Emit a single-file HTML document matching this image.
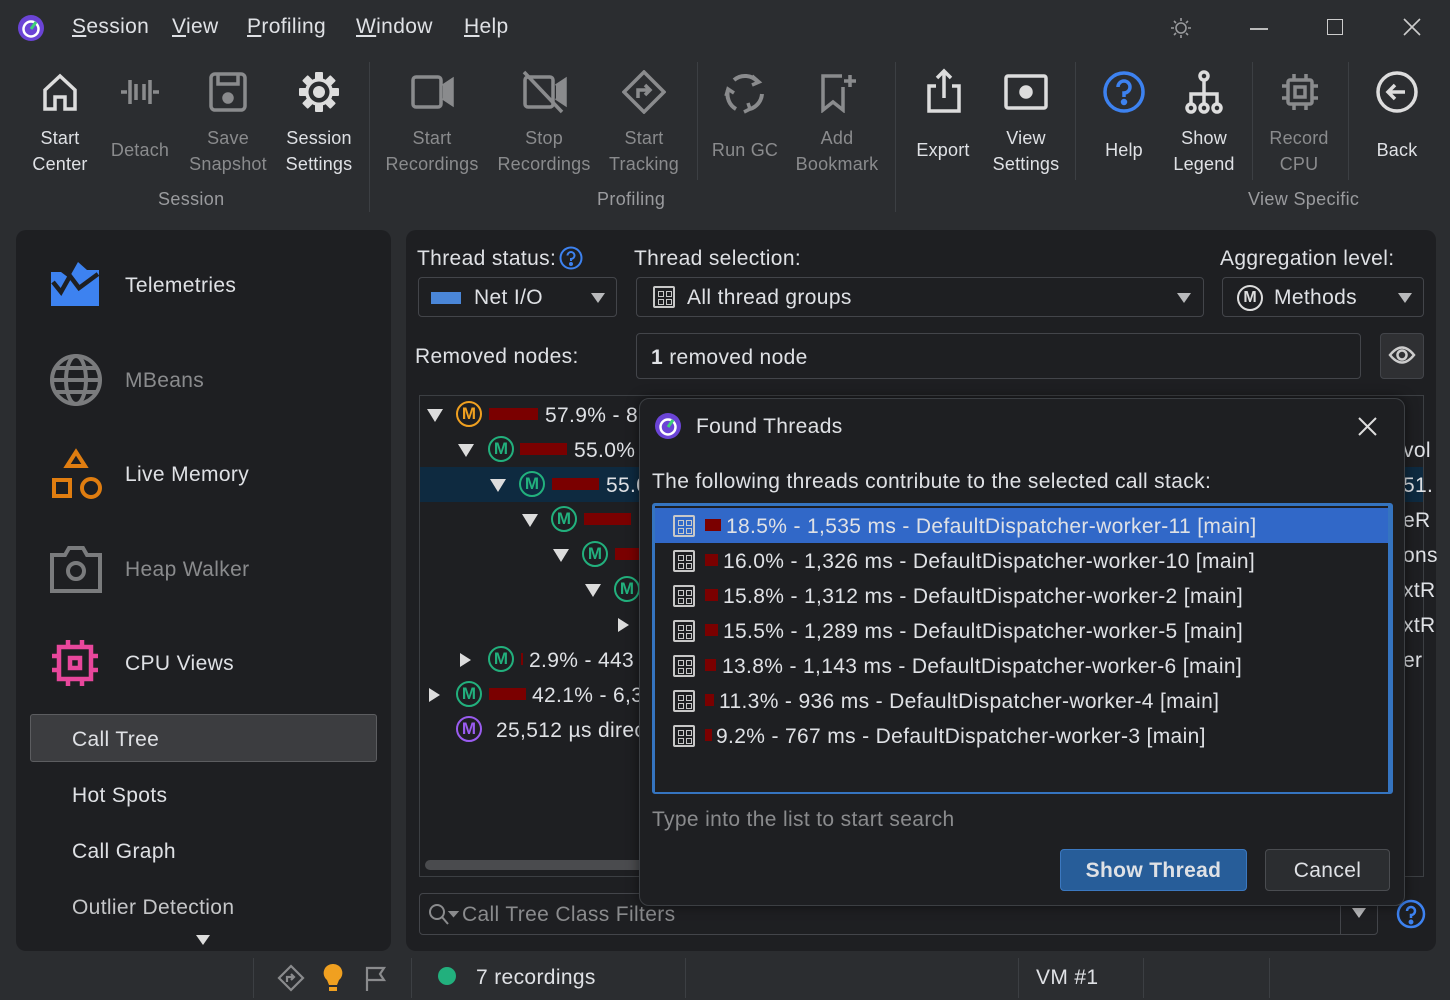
<!DOCTYPE html>
<html><head><meta charset="utf-8">
<style>
*{box-sizing:border-box;margin:0;padding:0}
body{width:1450px;height:1000px;background:#2b2d30;font-family:"Liberation Sans",sans-serif;color:#dfe1e5;position:relative;overflow:hidden;letter-spacing:0.35px}
.a{position:absolute}
.menu{top:15px;font-size:21px;color:#dfe1e5}
.menu u{text-decoration:underline}
.tb{position:absolute;width:120px;text-align:center;font-size:18px;line-height:26px;letter-spacing:0.2px}
.dis{color:#8a8b8d}
.sep{position:absolute;width:1px;background:#3c3f43}
.glab{position:absolute;font-size:18px;color:#9a9b9e}
.panel{position:absolute;background:#1e1f22;border-radius:10px}
.side{font-size:21px}
.fld{position:absolute;border:1px solid #43454a;border-radius:4px;background:#1e1f22;height:40px;font-size:21px;line-height:40px}
.tri{position:absolute;width:0;height:0;border-left:7px solid transparent;border-right:7px solid transparent;border-top:10px solid #b8b9bb}
.trr{position:absolute;width:0;height:0;border-top:7px solid transparent;border-bottom:7px solid transparent;border-left:11px solid #dcdcdc}
.trd{position:absolute;width:0;height:0;border-left:8px solid transparent;border-right:8px solid transparent;border-top:13px solid #dcdcdc}
.m{position:absolute;width:26px;height:26px;border:2.5px solid #22b07d;border-radius:50%;color:#22b07d;font-size:17px;font-weight:bold;text-align:center;line-height:21px;letter-spacing:0}
.bar{position:absolute;height:12px;background:#7a0000}
.tt{position:absolute;font-size:21px;white-space:nowrap}
.row{position:absolute;left:0;height:35px;width:100%;font-size:21px;line-height:37px;white-space:nowrap}
.gi{position:absolute;left:18px;top:7px;width:22px;height:22px;border:2px solid #c8c8c8;border-radius:2px;background:
linear-gradient(#c8c8c8,#c8c8c8) 3px 3px/6px 6px no-repeat,linear-gradient(#c8c8c8,#c8c8c8) 11px 3px/6px 6px no-repeat,linear-gradient(#c8c8c8,#c8c8c8) 3px 11px/6px 6px no-repeat,linear-gradient(#c8c8c8,#c8c8c8) 11px 11px/6px 6px no-repeat}
.gi:after{content:"";position:absolute;left:4px;top:4px;width:4px;height:4px;background:#1e1f22;box-shadow:8px 0 #1e1f22,0 8px #1e1f22,8px 8px #1e1f22}
.sel .gi:after{background:#3168c8;box-shadow:8px 0 #3168c8,0 8px #3168c8,8px 8px #3168c8}
</style></head><body>

<svg class="a" style="left:17px;top:14px" width="28" height="28" viewBox="0 0 28 28"><circle cx="14" cy="14" r="13" fill="#6b44d6"/><circle cx="14" cy="15" r="7.5" fill="none" stroke="#fff" stroke-width="2.5"/><path d="M14 15 L19 8" stroke="#3dd07a" stroke-width="3"/></svg>
<div class="a menu" style="left:72px"><u>S</u>ession</div>
<div class="a menu" style="left:172px"><u>V</u>iew</div>
<div class="a menu" style="left:247px"><u>P</u>rofiling</div>
<div class="a menu" style="left:356px"><u>W</u>indow</div>
<div class="a menu" style="left:464px"><u>H</u>elp</div>
<svg class="a" style="left:1170px;top:17px" width="22" height="22" viewBox="0 0 22 22" stroke="#9a9b9e" stroke-width="1.6" fill="none"><circle cx="11" cy="11" r="5"/><path d="M11 1v3M11 18v3M1 11h3M18 11h3M4 4l2 2M16 16l2 2M4 18l2-2M16 6l2-2"/></svg>
<div class="a" style="left:1250px;top:28px;width:18px;height:1.5px;background:#bbb"></div>
<div class="a" style="left:1327px;top:19px;width:16px;height:16px;border:1.5px solid #ccc"></div>
<svg class="a" style="left:1403px;top:18px" width="18" height="18" stroke="#ccc" stroke-width="1.6"><path d="M1 1L17 17M17 1L1 17"/></svg>

<div class="tb" style="left:0;top:125px">Start<br>Center</div>
<svg class="a" style="left:42px;top:72px" width="36" height="40" viewBox="0 0 36 40" fill="none" stroke="#ddd" stroke-width="3.5"><path d="M3 18L18 4L33 18V37H23V25H13V37H3Z"/></svg>
<div class="tb dis" style="left:80px;top:137px">Detach</div>
<svg class="a" style="left:118px;top:74px" width="44" height="36" viewBox="0 0 44 36" fill="none" stroke="#8a8b8d" stroke-width="3.5"><path d="M3 18H9M35 18H41M12 6V30M32 6V30M18 10V26M26 10V26"/></svg>
<div class="tb dis" style="left:168px;top:125px">Save<br>Snapshot</div>
<svg class="a" style="left:209px;top:72px" width="38" height="40" viewBox="0 0 38 40" fill="none" stroke="#8a8b8d" stroke-width="3.5"><rect x="2" y="2" width="34" height="36" rx="4"/><path d="M9 2V12H29V2"/><circle cx="19" cy="26" r="4" fill="#8a8b8d"/></svg>
<div class="tb" style="left:259px;top:125px">Session<br>Settings</div>
<svg class="a" style="left:298px;top:71px" width="42" height="42" viewBox="0 0 42 42"><g fill="#ddd"><rect x="17" y="1" width="8" height="40" rx="1"/><rect x="17" y="1" width="8" height="40" rx="1" transform="rotate(45 21 21)"/><rect x="17" y="1" width="8" height="40" rx="1" transform="rotate(90 21 21)"/><rect x="17" y="1" width="8" height="40" rx="1" transform="rotate(135 21 21)"/><circle cx="21" cy="21" r="14"/></g><circle cx="21" cy="21" r="10.5" fill="#2b2d30"/><circle cx="21" cy="21" r="6" fill="#ddd"/></svg>
<div class="sep" style="left:369px;top:62px;height:150px"></div>
<div class="tb dis" style="left:372px;top:125px">Start<br>Recordings</div>
<svg class="a" style="left:411px;top:74px" width="44" height="36" viewBox="0 0 44 36" fill="none" stroke="#8a8b8d" stroke-width="3.5"><rect x="2" y="3" width="28" height="30" rx="3"/><path d="M32 12L41 6V30L32 24" fill="#8a8b8d"/></svg>
<div class="tb dis" style="left:484px;top:125px">Stop<br>Recordings</div>
<svg class="a" style="left:522px;top:70px" width="46" height="44" viewBox="0 0 46 44" fill="none" stroke="#8a8b8d" stroke-width="3.5"><rect x="3" y="7" width="28" height="30" rx="3"/><path d="M34 16L43 10V34L34 28" fill="#8a8b8d"/><path d="M2 2L40 42"/></svg>
<div class="tb dis" style="left:584px;top:125px">Start<br>Tracking</div>
<svg class="a" style="left:622px;top:70px" width="44" height="44" viewBox="0 0 44 44" fill="none" stroke="#8a8b8d" stroke-width="3.5"><path d="M22 2L42 22L22 42L2 22Z"/><path d="M16 28V20H27M23 15L28 20L23 25"/></svg>
<div class="sep" style="left:697px;top:62px;height:118px"></div>
<div class="tb dis" style="left:685px;top:137px">Run GC</div>
<svg class="a" style="left:722px;top:70px" width="46" height="46" viewBox="0 0 46 46" fill="none" stroke="#8a8b8d" stroke-width="4"><path d="M12 10A17 17 0 0 1 36 12M40 24A17 17 0 0 1 28 39M14 39A17 17 0 0 1 6 20"/><path d="M30 6L37 12L30 15M22 42L28 39L26 33M4 26L6 19L12 23" stroke-width="3.5"/></svg>
<div class="tb dis" style="left:777px;top:125px">Add<br>Bookmark</div>
<svg class="a" style="left:820px;top:73px" width="38" height="40" viewBox="0 0 38 40" fill="none" stroke="#8a8b8d" stroke-width="3.5"><path d="M22 3H3V37L13 29L23 37V14M30 2V14M24 8H36"/></svg>
<div class="sep" style="left:895px;top:62px;height:150px"></div>
<div class="tb" style="left:883px;top:137px">Export</div>
<svg class="a" style="left:926px;top:68px" width="36" height="46" viewBox="0 0 36 46" fill="none" stroke="#ddd" stroke-width="3.5"><path d="M10 18H3V43H33V18H26M18 30V3M11 10L18 3L25 10"/></svg>
<div class="tb" style="left:966px;top:125px">View<br>Settings</div>
<svg class="a" style="left:1004px;top:74px" width="44" height="36" viewBox="0 0 44 36" fill="none" stroke="#ddd" stroke-width="3.5"><rect x="2" y="2" width="40" height="32" rx="2"/><circle cx="22" cy="18" r="5" fill="#ddd"/></svg>
<div class="sep" style="left:1075px;top:62px;height:118px"></div>
<div class="tb" style="left:1064px;top:137px">Help</div>
<svg class="a" style="left:1102px;top:70px" width="44" height="44" viewBox="0 0 44 44" fill="none" stroke="#3d82f0" stroke-width="3.5"><circle cx="22" cy="22" r="19"/><path d="M16 17A6 6 0 1 1 22 23V27"/><circle cx="22" cy="32" r="1.5" fill="#3d82f0"/></svg>
<div class="tb" style="left:1144px;top:125px">Show<br>Legend</div>
<svg class="a" style="left:1183px;top:70px" width="42" height="44" viewBox="0 0 42 44" fill="none" stroke="#ddd" stroke-width="3.5"><circle cx="21" cy="6" r="4"/><path d="M21 10V24M8 34V24H34V34M21 24V34"/><circle cx="8" cy="38" r="4"/><circle cx="21" cy="38" r="4"/><circle cx="34" cy="38" r="4"/></svg>
<div class="sep" style="left:1252px;top:62px;height:118px"></div>
<div class="tb dis" style="left:1239px;top:125px">Record<br>CPU</div>
<svg class="a" style="left:1280px;top:72px" width="40" height="40" viewBox="0 0 40 40" fill="none" stroke="#8a8b8d" stroke-width="3.5"><rect x="8" y="8" width="24" height="24" rx="2"/><rect x="15" y="15" width="10" height="10"/><path d="M14 2V8M26 2V8M14 32V38M26 32V38M2 14H8M2 26H8M32 14H38M32 26H38"/></svg>
<div class="sep" style="left:1348px;top:62px;height:118px"></div>
<div class="tb" style="left:1337px;top:137px">Back</div>
<svg class="a" style="left:1375px;top:70px" width="44" height="44" viewBox="0 0 44 44" fill="none" stroke="#ddd" stroke-width="3.5"><circle cx="22" cy="22" r="19"/><path d="M30 22H14M20 15L13 22L20 29"/></svg>
<div class="glab" style="left:158px;top:189px">Session</div>
<div class="glab" style="left:597px;top:189px">Profiling</div>
<div class="glab" style="left:1248px;top:189px">View Specific</div>

<div class="panel" style="left:16px;top:230px;width:375px;height:721px"></div>
<svg class="a" style="left:51px;top:262px" width="48" height="44" viewBox="0 0 48 44"><path d="M0 10V44H48V8L36 8 27 0 18 16 10 10Z" fill="#3d82f0"/><path d="M2 20L10 30 19 14 28 26 47 12" stroke="#1e1f22" stroke-width="4.5" fill="none"/></svg>
<div class="a side" style="left:125px;top:274px">Telemetries</div>
<svg class="a" style="left:49px;top:353px" width="54" height="54" viewBox="0 0 54 54" fill="none" stroke="#7a7b7d" stroke-width="4"><circle cx="27" cy="27" r="24"/><ellipse cx="27" cy="27" rx="10" ry="24"/><path d="M3 27H51M7 15H47M7 39H47"/></svg>
<div class="a side dis" style="left:125px;top:369px">MBeans</div>
<svg class="a" style="left:51px;top:448px" width="52" height="52" viewBox="0 0 52 52" fill="none" stroke="#e07d10" stroke-width="4"><path d="M25 4L34 18H16Z"/><rect x="3" y="32" width="16" height="16"/><circle cx="40" cy="40" r="9"/></svg>
<div class="a side" style="left:125px;top:463px">Live Memory</div>
<svg class="a" style="left:49px;top:545px" width="54" height="48" viewBox="0 0 54 48" fill="none" stroke="#7a7b7d" stroke-width="4"><path d="M3 10H16L20 3H34L38 10H51V46H3Z"/><circle cx="27" cy="26" r="8"/></svg>
<div class="a side dis" style="left:125px;top:558px">Heap Walker</div>
<svg class="a" style="left:51px;top:639px" width="48" height="48" viewBox="0 0 48 48" fill="none" stroke="#e8479c" stroke-width="4.5"><rect x="8" y="8" width="32" height="32"/><rect x="19" y="19" width="10" height="10"/><path d="M17 1V8M31 1V8M17 40V47M31 40V47M1 17H8M1 31H8M40 17H47M40 31H47"/></svg>
<div class="a side" style="left:125px;top:652px">CPU Views</div>
<div class="a" style="left:30px;top:714px;width:347px;height:48px;background:#3c3d40;border:1px solid #5c5d60;border-radius:3px"></div>
<div class="a side" style="left:72px;top:728px">Call Tree</div>
<div class="a side" style="left:72px;top:784px">Hot Spots</div>
<div class="a side" style="left:72px;top:840px">Call Graph</div>
<div class="a side" style="left:72px;top:896px;color:#c5c6c8">Outlier Detection</div>
<div class="tri" style="left:196px;top:935px;border-top-color:#ddd"></div>

<div class="panel" style="left:406px;top:230px;width:1030px;height:721px"></div>
<div class="a" style="left:417px;top:247px;font-size:21px">Thread status:</div>
<svg class="a" style="left:559px;top:246px" width="24" height="24" viewBox="0 0 24 24" fill="none" stroke="#3d82f0" stroke-width="2"><circle cx="12" cy="12" r="10.5"/><path d="M8.5 9.5A3.5 3.5 0 1 1 12 13V15"/><circle cx="12" cy="18" r="1" fill="#3d82f0"/></svg>
<div class="a" style="left:634px;top:247px;font-size:21px">Thread selection:</div>
<div class="a" style="left:1220px;top:247px;font-size:21px">Aggregation level:</div>
<div class="fld" style="left:418px;top:277px;width:199px"><div class="a" style="left:12px;top:14px;width:30px;height:12px;background:#4a86d8"></div><span class="a" style="left:55px">Net I/O</span><div class="tri" style="left:172px;top:15px"></div></div>
<div class="fld" style="left:636px;top:277px;width:568px"><div class="gi" style="left:16px;top:8px"></div><span class="a" style="left:50px">All thread groups</span><div class="tri" style="left:540px;top:15px"></div></div>
<div class="fld" style="left:1222px;top:277px;width:202px"><div class="a" style="left:14px;top:7px;width:26px;height:26px;border:2px solid #ddd;border-radius:50%;font-size:16px;font-weight:bold;text-align:center;line-height:22px;color:#ddd;letter-spacing:0">M</div><span class="a" style="left:51px">Methods</span><div class="tri" style="left:175px;top:15px"></div></div>
<div class="a" style="left:415px;top:345px;font-size:21px">Removed nodes:</div>
<div class="fld" style="left:636px;top:333px;width:725px;height:46px;line-height:47px"><span class="a" style="left:14px"><b>1</b> removed node</span></div>
<div class="a" style="left:1380px;top:333px;width:44px;height:46px;background:#2f3033;border:1px solid #43454a;border-radius:4px"></div>
<svg class="a" style="left:1388px;top:344px" width="28" height="22" viewBox="0 0 28 22" fill="none" stroke="#ccc" stroke-width="2.5"><path d="M2 11Q14 -4 26 11Q14 26 2 11Z"/><circle cx="14" cy="11" r="4.5"/></svg>

<div class="a" style="left:419px;top:395px;width:1005px;height:482px;border:1px solid #3c3f43"></div>
<div class="a" style="left:420px;top:467px;width:240px;height:35px;background:#0e2a40"></div>
<div class="a" style="left:1395px;top:467px;width:28px;height:35px;background:#0e2a40"></div>
<div class="a" style="left:425px;top:860px;width:220px;height:10px;border-radius:5px;background:#4a4b4e"></div>
<div class="trd" style="left:427px;top:409px"></div>
<div class="m" style="left:456px;top:401px;border-color:#f0a020;color:#f0a020">M</div><div class="bar" style="left:489px;top:408px;width:49px"></div><div class="tt" style="left:545px;top:404px">57.9% - 8,</div>
<div class="trd" style="left:458px;top:444px"></div>
<div class="m" style="left:488px;top:436px">M</div><div class="bar" style="left:520px;top:443px;width:47px"></div><div class="tt" style="left:574px;top:439px">55.0%</div>
<div class="trd" style="left:490px;top:479px"></div>
<div class="m" style="left:519px;top:471px">M</div><div class="bar" style="left:552px;top:478px;width:47px"></div><div class="tt" style="left:606px;top:474px">55.0</div>
<div class="trd" style="left:522px;top:514px"></div>
<div class="m" style="left:551px;top:506px">M</div><div class="bar" style="left:584px;top:513px;width:47px"></div>
<div class="trd" style="left:553px;top:549px"></div>
<div class="m" style="left:582px;top:541px">M</div><div class="bar" style="left:615px;top:548px;width:25px"></div>
<div class="trd" style="left:585px;top:584px"></div>
<div class="m" style="left:614px;top:576px">M</div>
<div class="trr" style="left:618px;top:618px"></div>
<div class="trr" style="left:460px;top:653px"></div>
<div class="m" style="left:488px;top:646px">M</div><div class="bar" style="left:521px;top:653px;width:2px"></div><div class="tt" style="left:529px;top:649px">2.9% - 443</div>
<div class="trr" style="left:429px;top:688px"></div>
<div class="m" style="left:456px;top:681px">M</div><div class="bar" style="left:489px;top:688px;width:37px"></div><div class="tt" style="left:532px;top:684px">42.1% - 6,3</div>
<div class="m" style="left:456px;top:716px;border-color:#9a5cf0;color:#9a5cf0">M</div><div class="tt" style="left:496px;top:719px">25,512 µs direc</div>
<div class="tt" style="left:1403px;top:439px">vol</div>
<div class="tt" style="left:1403px;top:474px">51.</div>
<div class="tt" style="left:1403px;top:509px">eR</div>
<div class="tt" style="left:1403px;top:544px">ons</div>
<div class="tt" style="left:1403px;top:579px">xtR</div>
<div class="tt" style="left:1403px;top:614px">xtR</div>
<div class="tt" style="left:1403px;top:649px">er</div>

<div class="fld" style="left:419px;top:893px;width:959px;height:42px"></div>
<svg class="a" style="left:428px;top:903px" width="32" height="24" viewBox="0 0 32 24" fill="none" stroke="#8a8b8d" stroke-width="2"><circle cx="9" cy="9" r="7"/><path d="M14 14L20 21"/><path d="M22 9H29L25.5 13Z" fill="#8a8b8d"/></svg>
<div class="a" style="left:462px;top:903px;font-size:21px;color:#8a8b8d">Call Tree Class Filters</div>
<div class="a" style="left:1340px;top:894px;width:1px;height:40px;background:#43454a"></div>
<div class="tri" style="left:1352px;top:908px"></div>
<svg class="a" style="left:1396px;top:899px" width="30" height="30" viewBox="0 0 30 30" fill="none" stroke="#3d82f0" stroke-width="2.5"><circle cx="15" cy="15" r="13"/><path d="M11 12A4 4 0 1 1 15 16V19"/><circle cx="15" cy="23" r="1.2" fill="#3d82f0"/></svg>

<div class="a" style="left:639px;top:398px;width:766px;height:508px;background:#1e1f22;border:1px solid #3c3f43;border-radius:10px;box-shadow:0 0 12px rgba(0,0,0,.5)"></div>
<svg class="a" style="left:654px;top:412px" width="28" height="28" viewBox="0 0 28 28"><circle cx="14" cy="14" r="13" fill="#6b44d6"/><circle cx="14" cy="15" r="7.5" fill="none" stroke="#fff" stroke-width="2.5"/><path d="M14 15 L19 8" stroke="#3dd07a" stroke-width="3"/></svg>
<div class="a" style="left:696px;top:415px;font-size:21px">Found Threads</div>
<svg class="a" style="left:1358px;top:417px" width="19" height="19" stroke="#ddd" stroke-width="2"><path d="M1 1L18 18M18 1L1 18"/></svg>
<div class="a" style="left:652px;top:470px;font-size:21px">The following threads contribute to the selected call stack:</div>
<div class="a" style="left:652px;top:503px;width:741px;height:291px;border:2px solid #3574c0;border-left-width:3px;border-right-width:5px;border-top-width:3px;border-radius:3px;overflow:hidden">
<div class="row sel" style="top:2px;background:#3168c8"><div class="gi"></div><div class="a" style="left:50px;top:11px;width:16px;height:12px;background:#7a0000"></div><span class="a" style="left:71px">18.5% - 1,535 ms - DefaultDispatcher-worker-11 [main]</span></div>
<div class="row" style="top:37px"><div class="gi"></div><div class="a" style="left:50px;top:11px;width:13px;height:12px;background:#7a0000"></div><span class="a" style="left:68px">16.0% - 1,326 ms - DefaultDispatcher-worker-10 [main]</span></div>
<div class="row" style="top:72px"><div class="gi"></div><div class="a" style="left:50px;top:11px;width:13px;height:12px;background:#7a0000"></div><span class="a" style="left:68px">15.8% - 1,312 ms - DefaultDispatcher-worker-2 [main]</span></div>
<div class="row" style="top:107px"><div class="gi"></div><div class="a" style="left:50px;top:11px;width:13px;height:12px;background:#7a0000"></div><span class="a" style="left:68px">15.5% - 1,289 ms - DefaultDispatcher-worker-5 [main]</span></div>
<div class="row" style="top:142px"><div class="gi"></div><div class="a" style="left:50px;top:11px;width:11px;height:12px;background:#7a0000"></div><span class="a" style="left:67px">13.8% - 1,143 ms - DefaultDispatcher-worker-6 [main]</span></div>
<div class="row" style="top:177px"><div class="gi"></div><div class="a" style="left:50px;top:11px;width:9px;height:12px;background:#7a0000"></div><span class="a" style="left:64px">11.3% - 936 ms - DefaultDispatcher-worker-4 [main]</span></div>
<div class="row" style="top:212px"><div class="gi"></div><div class="a" style="left:50px;top:11px;width:7px;height:12px;background:#7a0000"></div><span class="a" style="left:61px">9.2% - 767 ms - DefaultDispatcher-worker-3 [main]</span></div>
</div>
<div class="a" style="left:652px;top:808px;font-size:21px;color:#8a8b8d">Type into the list to start search</div>
<div class="a" style="left:1060px;top:849px;width:187px;height:42px;background:#275d99;border:1px solid #3b78c0;border-radius:4px;font-size:21px;font-weight:bold;text-align:center;line-height:42px">Show Thread</div>
<div class="a" style="left:1265px;top:849px;width:125px;height:42px;background:#2b2d30;border:1px solid #4a4c50;border-radius:4px;font-size:21px;text-align:center;line-height:42px">Cancel</div>

<div class="sep" style="left:253px;top:958px;height:40px"></div>
<svg class="a" style="left:277px;top:964px" width="28" height="28" viewBox="0 0 28 28" fill="none" stroke="#8a8b8d" stroke-width="2.2"><path d="M14 2L26 14L14 26L2 14Z"/><path d="M10 18V13H17M14 10L17 13L14 16"/></svg>
<svg class="a" style="left:322px;top:963px" width="22" height="30" viewBox="0 0 22 30"><path d="M11 1A9 9 0 0 1 17 17L15 22H7L5 17A9 9 0 0 1 11 1Z" fill="#f0a020"/><rect x="7" y="24" width="8" height="4" fill="#f0a020"/></svg>
<svg class="a" style="left:364px;top:966px" width="24" height="26" viewBox="0 0 24 26" fill="none" stroke="#8a8b8d" stroke-width="2.2"><path d="M3 25V2H20L16 8L20 14H3"/></svg>
<div class="sep" style="left:411px;top:958px;height:40px"></div>
<div class="a" style="left:438px;top:967px;width:18px;height:18px;border-radius:50%;background:#22b07d"></div>
<div class="a" style="left:476px;top:966px;font-size:21px">7 recordings</div>
<div class="sep" style="left:685px;top:958px;height:40px"></div>
<div class="sep" style="left:1018px;top:958px;height:40px"></div>
<div class="a" style="left:1036px;top:966px;font-size:21px">VM #1</div>
<div class="sep" style="left:1143px;top:958px;height:40px"></div>
<div class="sep" style="left:1269px;top:958px;height:40px"></div>
</body></html>
